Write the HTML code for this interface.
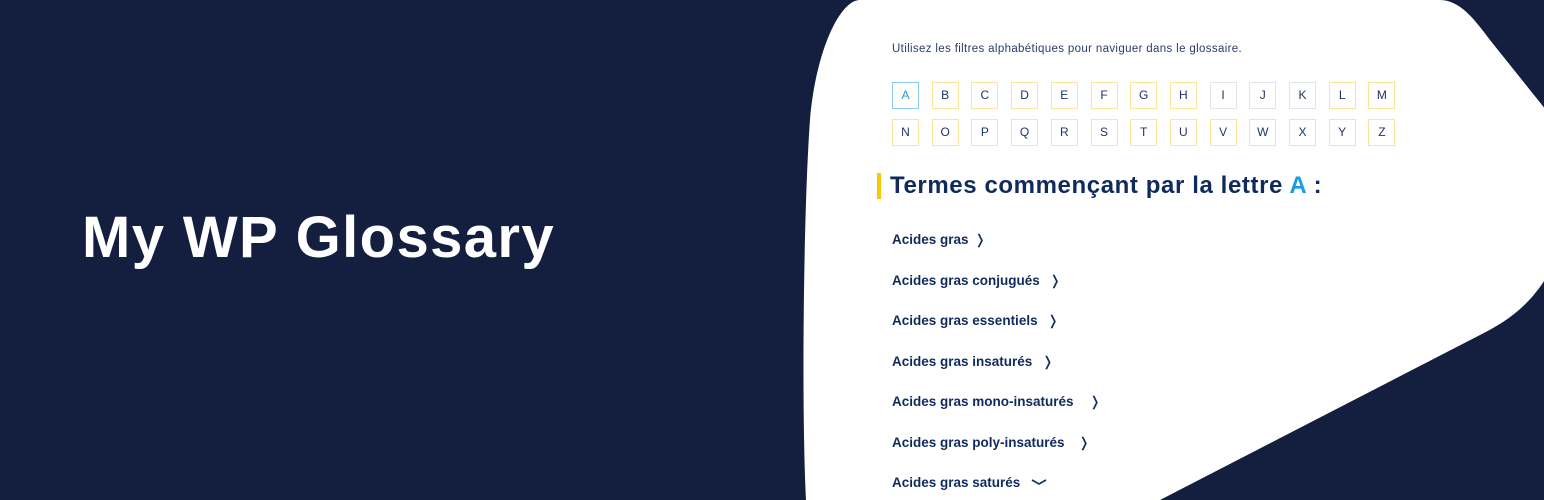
<!DOCTYPE html>
<html><head><meta charset="utf-8"><style>
body{margin:0;width:1544px;height:500px;overflow:hidden;background:#141f40;position:relative;font-family:"Liberation Sans",sans-serif}
svg.bg{position:absolute;left:0;top:0}
h1{position:absolute;left:82px;top:204px;margin:0;color:#fff;font-size:58px;font-weight:bold;letter-spacing:1.4px}
.intro{position:absolute;left:892px;top:43px;font-size:11.5px;color:#2a3d6a;letter-spacing:0.35px}
.box{position:absolute;width:25px;height:25px;border:1px solid #fbe59a;font-size:12px;color:#1e3563;text-align:center;line-height:25px;background:#fff}
.h2{position:absolute;left:890px;top:172px;font-size:24px;font-weight:bold;color:#0f2a5c;letter-spacing:0.6px}
.bar{position:absolute;left:877px;top:173px;width:4px;height:26px;background:#f8c800}
.it{position:absolute;left:892px;font-size:13.5px;font-weight:bold;color:#0f2a5c}
.it span{font-weight:normal;margin-left:6px}
</style></head><body>
<svg class="bg" width="1544" height="500"><path d="M860 0 L1440 0 C1460 0 1475 20 1490 40 L1570 140 L1560 250 C1540 300 1510 320 1480 335 L1160 500 L806 500 C801 400 804 200 810 120 C816 50 840 0 860 0 Z" fill="#fff"/></svg>
<h1>My WP Glossary</h1>
<div class="intro">Utilisez les filtres alphabétiques pour naviguer dans le glossaire.</div>
<div id="boxes"></div>
<div class="bar"></div>
<div class="h2">Termes commençant par la lettre <span style="color:#1a9be6">A</span> :</div>
<div class="it" style="top:232px">Acides gras<span>❭</span></div>
<div class="it" style="top:273px">Acides gras conjugués <span>❭</span></div>
<div class="it" style="top:313px">Acides gras essentiels <span>❭</span></div>
<div class="it" style="top:354px">Acides gras insaturés <span>❭</span></div>
<div class="it" style="top:394px">Acides gras mono-insaturés <span style="margin-left:12px">❭</span></div>
<div class="it" style="top:435px">Acides gras poly-insaturés <span style="margin-left:10px">❭</span></div>
<div class="it" style="top:475px">Acides gras saturés <svg width="18" height="10" style="margin-left:6px"><path d="M2 3 L9 7 L16 3" stroke="#0f2a5c" stroke-width="1.6" fill="none"/></svg></div>
<script>
var L="ABCDEFGHIJKLMNOPQRSTUVWXYZ",h="";
for(var i=0;i<26;i++){var r=Math.floor(i/13),c=i%13;var x=892+c*39.7,y=82+r*37;
var col=i==0?"border-color:#8cc8ef;color:#1a9be6":(i>=8&&i<=10?"border-color:#e2e4e8":"");
h+='<div class="box" style="left:'+x+'px;top:'+y+'px;'+col+'">'+L[i]+'</div>';}
document.getElementById("boxes").innerHTML=h;
</script>
</body></html>
